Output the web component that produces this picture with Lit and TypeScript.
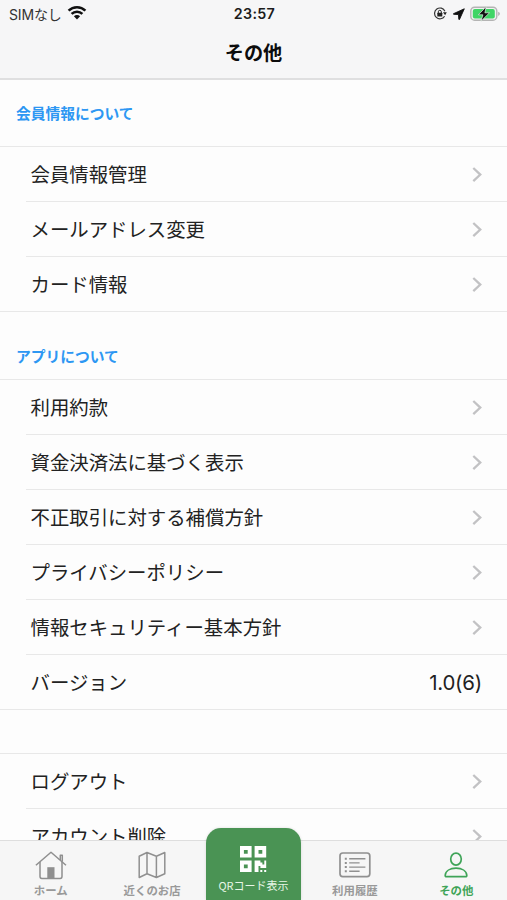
import { LitElement, html, css, svg, nothing } from "lit";
import { customElement, property } from "lit/decorators.js";
import { classMap } from "lit/directives/class-map.js";

@customElement("status-bar")
class StatusBar extends LitElement {
  static styles = css`
    :host {
      display: grid;
      grid-template-columns: 1fr auto 1fr;
      align-items: center;
      height: 27px;
      padding: 0 7px 0 9px;
      font-size: 14px;
      color: #1c1c1c;
    }
    .left, .right { display: flex; align-items: center; }
    .left { gap: 5px; font-size: 14px; letter-spacing: -0.15px; color: #333; }
    .right { justify-content: flex-end; gap: 6px; }
    .battery { margin-left: -1px; }
    .time { font-weight: 600; font-size: 14.3px; letter-spacing: 0.3px; }
    svg { display: block; }
    .left svg { margin-top: -2px; }
  `;
  render() {
    return html`
      <div class="left">
        <span>SIMなし</span>
        <svg width="20" height="15" viewBox="0 0 20 15" fill="none" stroke="#111" stroke-width="2.5">
          <path d="M1.6 5.6a12 12 0 0 1 16.8 0" />
          <path d="M4.6 8.9a7.6 7.6 0 0 1 10.8 0" />
          <path d="M10 14.4l-3.1-3.2a4.4 4.4 0 0 1 6.2 0z" fill="#111" stroke="none" />
        </svg>
      </div>
      <div class="time">23:57</div>
      <div class="right">
        <svg width="14" height="13" viewBox="0 0 14 13">
          <path d="M11.9 4.2A5.4 5.4 0 1 0 11.6 9.2" fill="none" stroke="#333" stroke-width="1.2" />
          <path d="M10 5.3h3.8l-1.7 3z" fill="#222" />
          <rect x="4.3" y="5.8" width="5" height="3.7" rx=".5" fill="#222" />
          <path d="M5.3 6V4.8a1.5 1.5 0 0 1 3 0V6" fill="none" stroke="#222" />
        </svg>
        <svg width="12" height="12" viewBox="0 0 12 12">
          <path d="M11.3.8L.5 5.7q-.4.5.3.6l4.7.3.3 4.6q.2.8.7.2z" fill="#111" stroke="#111" stroke-width=".9" />
        </svg>
        <svg class="battery" width="30" height="16" viewBox="0 0 30 16">
          <rect x=".8" y="1.2" width="26" height="13" rx="3.8" fill="#f2f2f2" stroke="#b4b4b4" stroke-width="1.4" />
          <rect x="2.8" y="3.1" width="22" height="9.3" rx="2" fill="#3fd565" />
          <path d="M28.1 5.7q1.8 .6 1.8 2.1t-1.8 2.1z" fill="#b4b4b4" />
          <path d="M16.2.6L8.4 8.8h4.5l-1.9 6.4 8.5-8.4h-4.6z" fill="#111" stroke="#e4f6e8" stroke-width=".7" />
        </svg>
      </div>
    `;
  }
}

@customElement("menu-row")
class MenuRow extends LitElement {
  @property() label = "";
  @property() value = "";
  static styles = css`
    :host { display: block; padding-left: 26px; height: 55px; }
    .row {
      box-sizing: border-box;
      display: flex;
      align-items: center;
      justify-content: space-between;
      height: 55px;
      padding: 2px 25px 0 4.5px;
      border-bottom: 1px solid #e8e8e8;
      font-size: 19.4px;
      line-height: 28px;
      color: #222;
      white-space: nowrap;
    }
    .value { font-family: Inter, "Liberation Sans", sans-serif; font-size: 20.4px; letter-spacing: -0.2px; }
    svg { display: block; }
    :host(.last) { padding-left: 0; }
    :host(.last) .row { padding-left: 30.5px; }
  `;
  render() {
    return html`
      <div class="row">
        <span>${this.label}</span>
        ${this.value
          ? html`<span class="value">${this.value}</span>`
          : html`<svg width="10" height="16" viewBox="0 0 10 16">
              <path d="M1.3 1L8.3 7.6l-7 6.6" fill="none" stroke="#c2c2c4" stroke-width="2.3" />
            </svg>`}
      </div>
    `;
  }
}

const tabIcons = {
  home: svg`<svg width="32" height="30" viewBox="0 0 32 30" fill="none" stroke="#8f8f8f" stroke-width="1.5" stroke-linejoin="round">
    <path d="M.9 15.2L16 2.2l15 13" />
    <path d="M5 12v14.6q0 1.8 1.8 1.8h18.4q1.8 0 1.8-1.8V12" />
    <path d="M25.3 10V5.2h2v6.6" />
    <path d="M12.3 17.2h7.2v11h-7.2z" fill="#8f8f8f" stroke="none" />
  </svg>`,
  map: svg`<svg width="28" height="28" viewBox="0 0 28 28" fill="none" stroke="#909090" stroke-width="1.5" stroke-linejoin="round">
    <path d="M1.2 5.2L9 1.5l9.4 3.7L26.8 1.5v21.3L18.4 26.5 9 22.8 1.2 26.5z M9 1.5v21.3M18.4 5.2v21.3" />
  </svg>`,
  list: svg`<svg width="32" height="26" viewBox="0 0 32 26" fill="none" stroke="#909090" stroke-width="1.4">
    <rect x="1" y="1" width="29.8" height="23.6" rx="2.8" stroke-width="1.7" />
    <path d="M10.2 6.7h16.2M10.2 10.9h10.4M10.2 15.1h16.2M10.2 19.3h10.4" />
    <path d="M5.8 6.7h2M5.8 10.9h2M5.8 15.1h2M5.8 19.3h2" stroke-width="2" />
  </svg>`,
  person: svg`<svg width="24" height="26" viewBox="0 0 24 26" fill="none" stroke="#3fa458" stroke-width="1.7" stroke-linejoin="round">
    <ellipse cx="12" cy="7.1" rx="5.3" ry="6" />
    <path d="M2.5 24.6q-1.4 0-1.3-1.3C1.6 18.9 6 16.2 12 16.2s10.4 2.7 10.8 7.1q.1 1.3-1.3 1.3z" />
  </svg>`,
  qr: svg`<svg width="28" height="28" viewBox="0 0 28 28">
    <path fill="#fff" fill-rule="evenodd" d="M1 1h11.6v11.4H1z M4.9 4.9v3.8h3.8V4.9z M15.6 1h11.6v11.4H15.6z M19.5 4.9v3.8h3.8V4.9z M1 15.5h11.6V27H1z M4.9 19.4v3.8h3.8v-3.8z" />
    <path fill="#fff" d="M15.6 15.5h5.8v2h2v2h1.9v-4h1.9v7.6h-5.8v-2h-1.9V27h-3.9z M21.3 25h2v2h-2z M25.2 25h2v2h-2z" />
  </svg>`,
};

@customElement("tab-item")
class TabItem extends LitElement {
  @property() icon: keyof typeof tabIcons = "home";
  @property() label = "";
  @property({ type: Boolean }) active = false;
  static styles = css`
    :host { display: block; }
    .tab {
      display: flex;
      flex-direction: column;
      align-items: center;
      color: #999;
      font-size: 11.4px;
      font-weight: 700;
      line-height: 16px;
      white-space: nowrap;
    }
    .glyph { display: flex; align-items: center; justify-content: center; height: 30px; margin: 9px 0 3px; }
    .active { color: #3fa458; }
  `;
  render() {
    return html`<div class=${classMap({ tab: true, active: this.active })}>
      <span class="glyph">${tabIcons[this.icon]}</span>
      <span>${this.label}</span>
    </div>`;
  }
}

const groups: { title: string; rows: { label: string; value?: string }[] }[] = [
  {
    title: "会員情報について",
    rows: [{ label: "会員情報管理" }, { label: "メールアドレス変更" }, { label: "カード情報" }],
  },
  {
    title: "アプリについて",
    rows: [
      { label: "利用約款" },
      { label: "資金決済法に基づく表示" },
      { label: "不正取引に対する補償方針" },
      { label: "プライバシーポリシー" },
      { label: "情報セキュリティー基本方針" },
      { label: "バージョン", value: "1.0(6)" },
    ],
  },
  { title: "", rows: [{ label: "ログアウト" }, { label: "アカウント削除" }] },
];

@customElement("app-root")
class AppRoot extends LitElement {
  static styles = css`
    :host {
      display: flex;
      flex-direction: column;
      height: 900px;
      overflow: hidden;
      background: #fdfdfd;
      font-family: Inter, "Noto Sans CJK JP", sans-serif;
    }
    header {
      box-sizing: border-box;
      flex: none;
      height: 80px;
      background: #f6f6f7;
      border-bottom: 2px solid #dfdfe0;
    }
    h1 {
      margin: 0;
      height: 51px;
      font-size: 19.2px;
      font-weight: 700;
      line-height: 52px;
      text-align: center;
      color: #0c0c0c;
    }
    main { flex: 1; min-height: 0; overflow: hidden; }
    h2 {
      box-sizing: border-box;
      margin: 0;
      height: 67px;
      padding: 23px 16px 0;
      font-size: 14.75px;
      font-weight: 700;
      line-height: 22px;
      color: #2d97f3;
      display: flex;
      align-items: center;
    }
    .first h2 { height: 66px; padding-top: 1px; }
    .rows { border-top: 1px solid #e8e8e8; }
    .spacer { height: 43px; }
    nav {
      box-sizing: border-box;
      flex: none;
      display: grid;
      grid-template-columns: repeat(5, 1fr);
      height: 60px;
      background: #f6f6f6;
      border-top: 1px solid #dedede;
    }
    .qr {
      display: flex;
      flex-direction: column;
      align-items: center;
      justify-self: center;
      box-sizing: border-box;
      width: 95px;
      height: 72px;
      margin-top: -13px;
      padding-top: 17px;
      gap: 4px;
      border-radius: 15px 15px 0 0;
      background: #4a9354;
      color: #e8f6e6;
      font-family: "Noto Sans CJK JP", sans-serif;
      font-size: 11px;
      line-height: 16px;
      white-space: nowrap;
      box-shadow: 0 0 3px rgb(0 0 0 / 12%);
    }
  `;
  render() {
    return html`
      <header>
        <status-bar></status-bar>
        <h1>その他</h1>
      </header>
      <main>
        ${groups.map(
          (g, i) => html`<section class=${classMap({ first: i === 0 })}>
            ${g.title ? html`<h2>${g.title}</h2>` : html`<div class="spacer"></div>`}
            <div class="rows">
              ${g.rows.map(
                (r, n) => html`<menu-row
                  class=${n === g.rows.length - 1 ? "last" : nothing}
                  .label=${r.label}
                  .value=${r.value ?? ""}
                ></menu-row>`
              )}
            </div>
          </section>`
        )}
      </main>
      <nav>
        <tab-item icon="home" label="ホーム"></tab-item>
        <tab-item icon="map" label="近くのお店"></tab-item>
        <div class="qr">${tabIcons.qr}<span>QRコード表示</span></div>
        <tab-item icon="list" label="利用履歴"></tab-item>
        <tab-item icon="person" label="その他" active></tab-item>
      </nav>
    `;
  }
}
